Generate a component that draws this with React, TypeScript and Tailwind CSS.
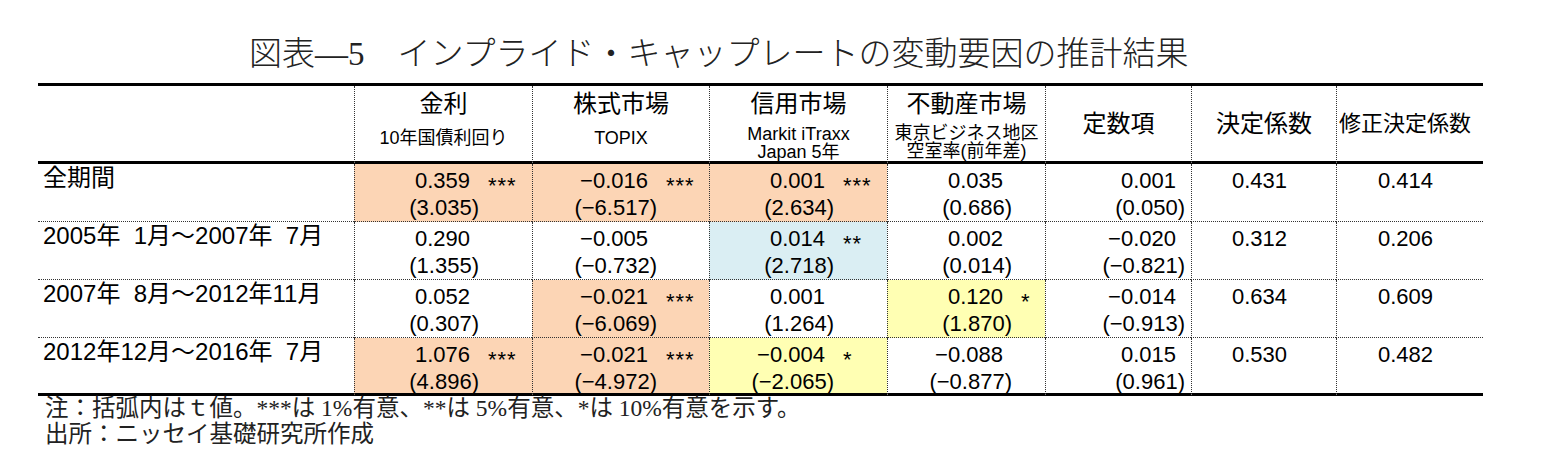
import React from "react";

const sans = "font-['Liberation_Sans','Noto_Sans_CJK_JP',sans-serif]";
const serif = "font-['Liberation_Serif','Noto_Sans_CJK_JP',serif]";

type Cell = { v: string; t?: string; s?: string; bg?: string };

const ORANGE = "bg-[#fcd5b5]";
const BLUE = "bg-[#daeef3]";
const YELLOW = "bg-[#ffffb3]";

const rows: { label: string; cells: Cell[]; c: [string, string]; r2: string; ar2: string }[] = [
  {
    label: "全期間",
    cells: [
      { v: "0.359", t: "(3.035)", s: "***", bg: ORANGE },
      { v: "−0.016", t: "(−6.517)", s: "***", bg: ORANGE },
      { v: "0.001", t: "(2.634)", s: "***", bg: ORANGE },
      { v: "0.035", t: "(0.686)" },
    ],
    c: ["0.001", "(0.050)"],
    r2: "0.431",
    ar2: "0.414",
  },
  {
    label: "2005年\u20071月～2007年\u20077月",
    cells: [
      { v: "0.290", t: "(1.355)" },
      { v: "−0.005", t: "(−0.732)" },
      { v: "0.014", t: "(2.718)", s: "**", bg: BLUE },
      { v: "0.002", t: "(0.014)" },
    ],
    c: ["−0.020", "(−0.821)"],
    r2: "0.312",
    ar2: "0.206",
  },
  {
    label: "2007年\u20078月～2012年11月",
    cells: [
      { v: "0.052", t: "(0.307)" },
      { v: "−0.021", t: "(−6.069)", s: "***", bg: ORANGE },
      { v: "0.001", t: "(1.264)" },
      { v: "0.120", t: "(1.870)", s: "*", bg: YELLOW },
    ],
    c: ["−0.014", "(−0.913)"],
    r2: "0.634",
    ar2: "0.609",
  },
  {
    label: "2012年12月～2016年\u20077月",
    cells: [
      { v: "1.076", t: "(4.896)", s: "***", bg: ORANGE },
      { v: "−0.021", t: "(−4.972)", s: "***", bg: ORANGE },
      { v: "−0.004", t: "(−2.065)", s: "*", bg: YELLOW },
      { v: "−0.088", t: "(−0.877)" },
    ],
    c: ["0.015", "(0.961)"],
    r2: "0.530",
    ar2: "0.482",
  },
];

// dotted rules, one side at a time so the thick solid rules stay solid
const line = "border-l border-l-[#333] [border-left-style:dotted]";
const head = "h-[78px] border-b-[3px] border-b-black";

const App = () => {
  return (
    <div className="w-[1541px] h-[474px] bg-white overflow-hidden text-black">
      <div className="ml-[38px] w-[1445px] pt-[34px]">
        <div
          className={`${serif} h-[40px] leading-[40px] text-[33px] font-light text-[#222] pl-[211px] mb-[9px] whitespace-nowrap`}
        >
          図表―5　インプライド・キャップレートの変動要因の推計結果
        </div>

        <div
          className={`${sans} grid grid-cols-[316px_178px_177px_178px_158px_146px_145px_147px] border-t-[3px] border-black`}
        >
          {/* header */}
          <div className={head}></div>
          <div className={`${head} ${line} text-center`}>
            <div className="pt-[2px] leading-[32px] text-[24px]">金利</div>
            <div className="mt-[10px] leading-[17px] text-[18px]">10年国債利回り</div>
          </div>
          <div className={`${head} ${line} text-center`}>
            <div className="pt-[2px] leading-[32px] text-[24px]">株式市場</div>
            <div className="mt-[10px] leading-[17px] text-[18px]">TOPIX</div>
          </div>
          <div className={`${head} ${line} text-center`}>
            <div className="pt-[2px] leading-[32px] text-[24px]">信用市場</div>
            <div className="mt-[5px] leading-[18px] text-[18px]">
              <div>Markit iTraxx</div>
              <div>Japan 5年</div>
            </div>
          </div>
          <div className={`${head} ${line} text-center`}>
            <div className="pt-[2px] leading-[32px] text-[24px]">不動産市場</div>
            <div className="mt-[4px] leading-[18px] text-[18px]">
              <div>東京ビジネス地区</div>
              <div>空室率(前年差)</div>
            </div>
          </div>
          <div className={`${head} ${line} flex items-center justify-center text-[24px]`}>定数項</div>
          <div className={`${head} ${line} flex items-center justify-center text-[24px]`}>決定係数</div>
          <div className={`${head} ${line} flex items-center pl-[2px] text-[22px] whitespace-nowrap`}>
            修正決定係数
          </div>

          {/* body */}
          {rows.map((row, i) => {
            const last = i === rows.length - 1;
            const bottom = last
              ? "h-[58px] border-b-[3px] border-b-black"
              : "h-[58px] border-b border-b-[#333] [border-bottom-style:dotted]";
            return (
              <React.Fragment key={i}>
                <div className={`${bottom} pl-[5px] text-[24px] leading-[28px] whitespace-nowrap`}>
                  {row.label}
                </div>
                {row.cells.map((c, j) => (
                  <div
                    key={j}
                    className={`${bottom} ${line} ${c.bg ?? ""} pt-[3px] text-[22px] leading-[27px]`}
                  >
                    <div className="flex">
                      <span className="w-[124px] pr-[9px] text-right">{c.v}</span>
                      {c.s && (
                        <span className="pl-[9px] text-[22px] tracking-[1px] inline-block translate-y-[5px]">
                          {c.s}
                        </span>
                      )}
                    </div>
                    <div className="w-[124px] text-right">{c.t}</div>
                  </div>
                ))}
                <div
                  className={`${bottom} ${line} pt-[3px] pr-[6px] text-[22px] leading-[27px] flex flex-col items-end`}
                >
                  <div className="pr-[9px]">{row.c[0]}</div>
                  <div>{row.c[1]}</div>
                </div>
                <div className={`${bottom} ${line} pt-[3px] pr-[9px] text-[22px] leading-[27px] text-center`}>
                  {row.r2}
                </div>
                <div className={`${bottom} ${line} pt-[3px] pr-[9px] text-[22px] leading-[27px] text-center`}>
                  {row.ar2}
                </div>
              </React.Fragment>
            );
          })}
        </div>

        <div className={`${serif} pl-[7px] text-[23.5px] leading-[24px] text-[#222] whitespace-nowrap`}>
          <div>注：括弧内はｔ値。***は 1%有意、**は 5%有意、*は 10%有意を示す。</div>
          <div className="mt-[2px]">出所：ニッセイ基礎研究所作成</div>
        </div>
      </div>
    </div>
  );
};

export default App;
